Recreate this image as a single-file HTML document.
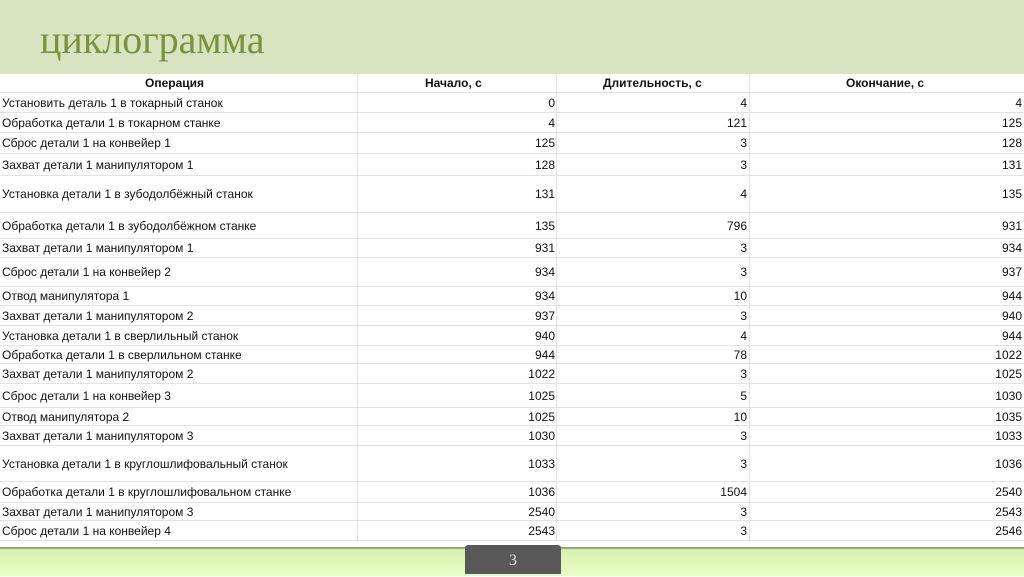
<!DOCTYPE html><html><head><meta charset="utf-8"><style>
body{margin:0;width:1024px;height:574px;position:relative;overflow:hidden;background:#fff;font-family:"Liberation Sans","DejaVu Sans",sans-serif;}
.hdr{position:absolute;left:0;top:0;width:1024px;height:74px;background:#d7e4bf;}
.hdr div{position:absolute;left:40px;top:16px;font-family:"Liberation Serif",serif;font-size:40px;color:#77933c;}
.r{position:absolute;left:0;width:1024px;border-bottom:1px solid #e2e2e2;font-size:12px;color:#111;}
.r span{position:absolute;top:50%;transform:translateY(-50%);white-space:nowrap}
.a{left:2px}.b{right:469px}.c{right:277px}.d{right:2px}
.v{position:absolute;top:74px;height:466px;width:1px;background:#e4e4e4}
.foot{position:absolute;left:0;top:547px;width:1024px;height:27px;background:linear-gradient(#d4f0a8,#eaffc8);border-top:2px solid #98a878}
.tab{position:absolute;left:465px;top:545px;width:96px;height:29px;background:#595959;border-radius:3px 3px 0 0;color:#ddd;font-family:"Liberation Serif",serif;font-size:16px;text-align:center;line-height:32px}
</style></head><body>
<div class="hdr"><div>циклограмма</div></div>
<div class="v" style="left:357px"></div><div class="v" style="left:556px"></div><div class="v" style="left:749px"></div>
<div class="r" style="top:74px;height:18px;font-weight:bold"><span style="left:145px">Операция</span><span style="left:425px">Начало, с</span><span style="left:603px">Длительность, с</span><span style="left:846px">Окончание, с</span></div>
<div class="r" style="top:93px;height:19px"><span class="a">Установить деталь 1 в токарный станок</span><span class="b">0</span><span class="c">4</span><span class="d">4</span></div>
<div class="r" style="top:113px;height:19px"><span class="a">Обработка детали 1 в токарном станке</span><span class="b">4</span><span class="c">121</span><span class="d">125</span></div>
<div class="r" style="top:133px;height:20px"><span class="a">Сброс детали 1 на конвейер 1</span><span class="b">125</span><span class="c">3</span><span class="d">128</span></div>
<div class="r" style="top:154px;height:21px"><span class="a">Захват детали 1 манипулятором 1</span><span class="b">128</span><span class="c">3</span><span class="d">131</span></div>
<div class="r" style="top:176px;height:36px"><span class="a">Установка детали 1 в зубодолбёжный станок</span><span class="b">131</span><span class="c">4</span><span class="d">135</span></div>
<div class="r" style="top:213px;height:25px"><span class="a">Обработка детали 1 в зубодолбёжном станке</span><span class="b">135</span><span class="c">796</span><span class="d">931</span></div>
<div class="r" style="top:239px;height:18px"><span class="a">Захват детали 1 манипулятором 1</span><span class="b">931</span><span class="c">3</span><span class="d">934</span></div>
<div class="r" style="top:258px;height:28px"><span class="a">Сброс детали 1 на конвейер 2</span><span class="b">934</span><span class="c">3</span><span class="d">937</span></div>
<div class="r" style="top:287px;height:18px"><span class="a">Отвод манипулятора 1</span><span class="b">934</span><span class="c">10</span><span class="d">944</span></div>
<div class="r" style="top:306px;height:19px"><span class="a">Захват детали 1 манипулятором 2</span><span class="b">937</span><span class="c">3</span><span class="d">940</span></div>
<div class="r" style="top:326px;height:19px"><span class="a">Установка детали 1 в сверлильный станок</span><span class="b">940</span><span class="c">4</span><span class="d">944</span></div>
<div class="r" style="top:346px;height:17px"><span class="a">Обработка детали 1 в сверлильном станке</span><span class="b">944</span><span class="c">78</span><span class="d">1022</span></div>
<div class="r" style="top:364px;height:19px"><span class="a">Захват детали 1 манипулятором 2</span><span class="b">1022</span><span class="c">3</span><span class="d">1025</span></div>
<div class="r" style="top:384px;height:23px"><span class="a">Сброс детали 1 на конвейер 3</span><span class="b">1025</span><span class="c">5</span><span class="d">1030</span></div>
<div class="r" style="top:408px;height:17px"><span class="a">Отвод манипулятора 2</span><span class="b">1025</span><span class="c">10</span><span class="d">1035</span></div>
<div class="r" style="top:426px;height:19px"><span class="a">Захват детали 1 манипулятором 3</span><span class="b">1030</span><span class="c">3</span><span class="d">1033</span></div>
<div class="r" style="top:446px;height:35px"><span class="a">Установка детали 1 в круглошлифовальный станок</span><span class="b">1033</span><span class="c">3</span><span class="d">1036</span></div>
<div class="r" style="top:482px;height:20px"><span class="a">Обработка детали 1 в круглошлифовальном станке</span><span class="b">1036</span><span class="c">1504</span><span class="d">2540</span></div>
<div class="r" style="top:503px;height:17px"><span class="a">Захват детали 1 манипулятором 3</span><span class="b">2540</span><span class="c">3</span><span class="d">2543</span></div>
<div class="r" style="top:521px;height:19px"><span class="a">Сброс детали 1 на конвейер 4</span><span class="b">2543</span><span class="c">3</span><span class="d">2546</span></div>
<div class="foot"></div><div class="tab">3</div>
</body></html>
